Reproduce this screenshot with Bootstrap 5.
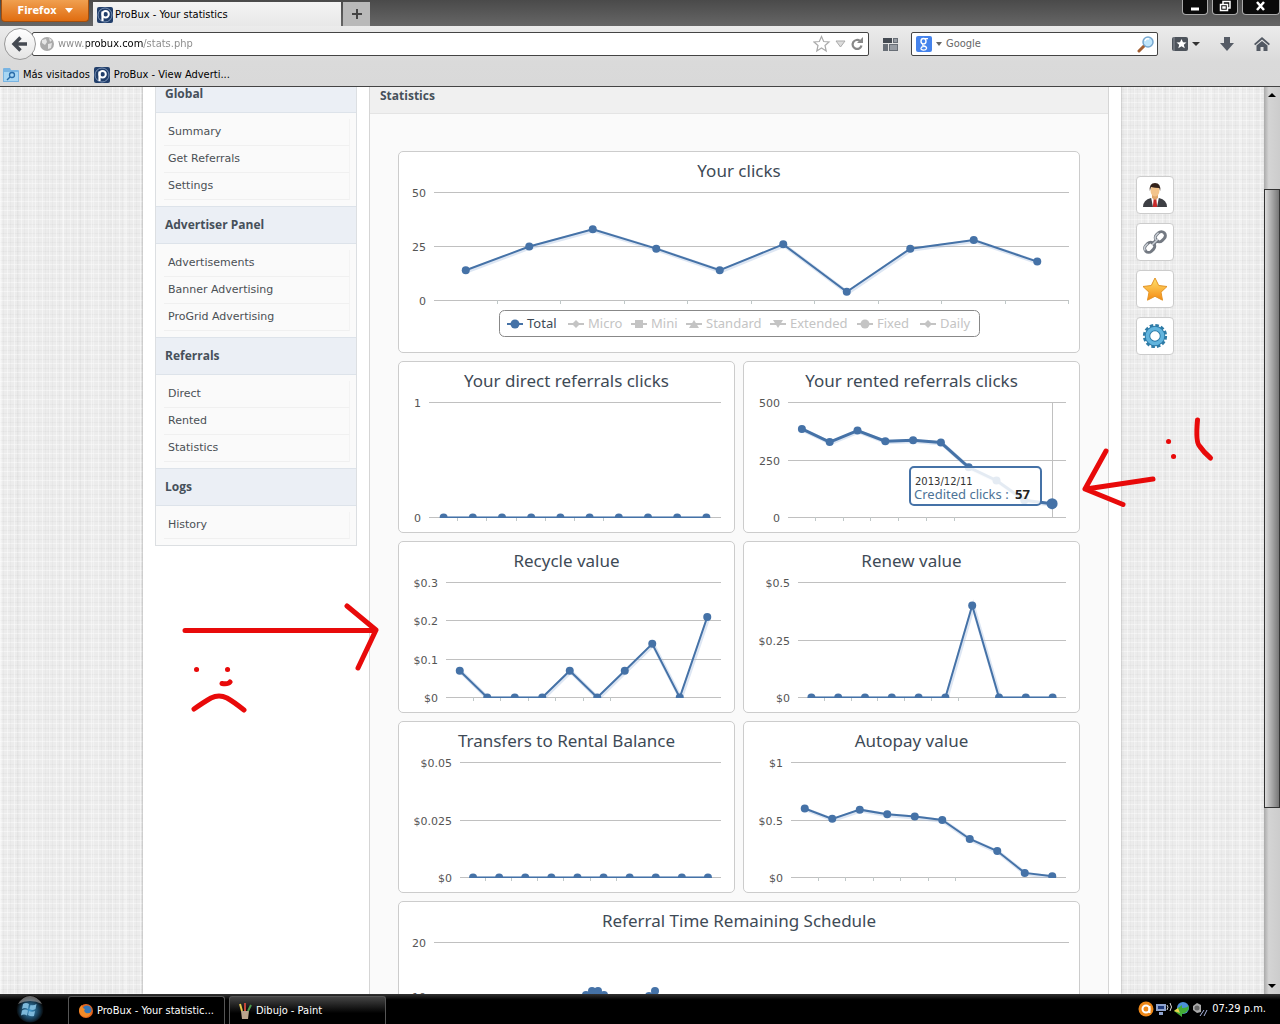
<!DOCTYPE html>
<html lang="es">
<head>
<meta charset="utf-8">
<meta name="viewport" content="width=device-width, initial-scale=1">
<title>ProBux - Your statistics</title>
<link href="https://cdn.jsdelivr.net/npm/bootstrap@5.3.0/dist/css/bootstrap.min.css" rel="stylesheet">
<style>
  body { font-family: "DejaVu Sans Condensed", "DejaVu Sans", sans-serif; font-size: 11px; line-height: 16px; color: #000; background: #000; }
  button, input { font: inherit; }
  svg { display: block; flex: none; }
  .titlebar { height: 26px; background: linear-gradient(#4a4a4a, #666); padding-left: 1px; }
  .ff-btn { width: 88px; height: 22px; border: 1px solid #a54f0c; border-top: 0; border-radius: 0 0 4px 4px; background: linear-gradient(#f0a050, #e06c10); color: #fff; font-weight: bold; padding: 0; }
  .win-tab { width: 248px; height: 24px; background: linear-gradient(#f4f4f4, #e8e8e8); margin-left: 4px; padding: 2px 0 0 4px; gap: 2px; }
  .plus-tab { width: 27px; height: 24px; border: 0; background: #b9b9b9; margin-left: 2px; padding: 0; }
  .winctl { width: 26px; height: 15px; border: 1px solid #aaa; border-top: 0; border-radius: 0 0 4px 4px; background: #0a0a0a; padding: 0; }
  .winctl.wide { width: 38px; }
  .chrome { background: linear-gradient(#ececec, #dadada 60%, #d9d9d9); border-bottom: 1px solid #444; height: 61px; }
  .navrow { height: 36px; padding: 0 10px 0 4px; }
  .back { width: 32px; height: 32px; border: 1px solid #999; border-radius: 50%; background: linear-gradient(#fff, #e4e4e4); padding: 0; z-index: 2; margin-right: -4px; }
  .field { height: 24px; background: #fff; border: 1px solid #444; border-radius: 2px; }
  .urlbox { padding: 0 5px 0 7px; }
  .field input { border: 0; outline: 0; padding: 0; background: transparent; color: #666; }
  .field .url { color: transparent; background: linear-gradient(90deg, #888 28px, #000 28px, #000 85px, #888 85px); -webkit-background-clip: text; background-clip: text; margin-left: 4px; }
  .searchbox { width: 247px; margin-left: 13px; padding: 0 3px 0 4px; }
  .searchbox input { width: 100px; }
  .plainbtn { border: 0; padding: 0; background: transparent; }
  .groups, .bm { margin-left: 14px; }
  .dl, .home { margin-left: 20px; }
  .marks { height: 25px; padding-left: 3px; }
  .marks a, .side-list a { text-decoration: none; color: #000; }
  .viewport { overflow: hidden; min-height: 0; background-color: #ececec;
    background-image: repeating-linear-gradient(90deg, rgba(255,255,255,.4) 0 1px, transparent 1px 3px, rgba(0,0,0,.02) 3px 4px, transparent 4px 7px),
      repeating-linear-gradient(0deg, rgba(255,255,255,.4) 0 1px, transparent 1px 4px, rgba(0,0,0,.025) 4px 5px, transparent 5px 9px),
      repeating-linear-gradient(90deg, rgba(255,255,255,.3) 0 2px, transparent 2px 17px, rgba(0,0,0,.015) 17px 19px, transparent 19px 31px); }
  .gutter { flex: 1 1 0; min-width: 0; }
  .site { width: 978px; margin-top: -13px; padding: 0 12px; gap: 12px; background: #fff; box-shadow: 0 0 2px #999; font-family: "DejaVu Sans", sans-serif; }
  .side { width: 202px; align-self: flex-start; border: 1px solid #dcdfe2; background: #fafafa; }
  .side h2, .panel-title { font-family: "Open Sans", "Noto Sans", sans-serif; font-size: 12px; font-weight: bold; color: #46505a; margin: 0; }
  .side h2 { height: 38px; line-height: 36px; padding-left: 9px; background: #ebeff5; border: 1px solid #dde3ea; border-width: 1px 0; }
  .side-list { padding: 6px 6px 6px 8px; margin: 0; list-style: none; }
  .side-list li { height: 27px; padding: 5px 0 0 4px; border-right: 1px solid #f3f3f3; border-bottom: 1px solid #f0f0f0; }
  .side-list a { color: #4b5055; }
  .main { background: #fafafa; border: 1px solid #d5d5d5; border-width: 0 1px; }
  .panel-title { height: 40px; line-height: 43px; padding-left: 10px; background: #f0f0f0; border-bottom: 1px solid #e4e4e4; }
  .charts { padding: 37px 28px 0; display: grid; grid-template-columns: 1fr 1fr; gap: 8px; }
  .chart { border: 1px solid #ccc; border-radius: 5px; background: #fff; }
  .chart.full { grid-column: span 2; }
  .chart svg { width: 100%; height: auto; }
  .dock { padding: 89px 0 0 15px; gap: 9px; }
  .dock button { width: 38px; height: 38px; padding: 0; border: 1px solid #ccc; border-radius: 4px; background: #fff; }
  .scroller { width: 16px; background: linear-gradient(90deg, #aaa, #d4d4d4 30%, #ccc); }
  .scroller .thumb { height: 619px; margin-top: 86px; border: 1px solid #333; background: linear-gradient(90deg, #ddd, #bbb 30%, #777); }
  .taskbar { height: 30px; background: linear-gradient(#333, #000 20%); color: #fff; padding-right: 14px; }
  .orb { margin: 0 24px 0 16px; }
  .task { height: 28px; width: 157px; border: 1px solid #555; border-width: 1px 1px 0; border-radius: 3px 3px 0 0; background: #000; color: #fff; padding: 0 0 0 10px; text-align: left; }
  .task.idle { background: linear-gradient(#444, #000 60%); margin-left: 4px; padding-left: 8px; }
  .ink { position: absolute; left: 0; top: 0; pointer-events: none; z-index: 5; }
</style>
<script src="https://cdn.jsdelivr.net/npm/bootstrap@5.3.0/dist/js/bootstrap.bundle.min.js"></script>
</head>
<body class="vh-100 d-flex flex-column overflow-hidden position-relative">
<svg width="0" height="0" class="position-absolute">
  <symbol id="logo" viewBox="0 0 16 16"><rect width="16" height="16" rx="2" fill="#223f6b"/><circle cx="8" cy="8" r="7" fill="none" stroke="#8ea4c6" stroke-width=".8"/><path d="M5.500 14V4.500" stroke="#fff" stroke-width="2.200"/><circle cx="8.600" cy="7.300" r="3.200" fill="none" stroke="#fff" stroke-width="2"/></symbol>
</svg>

<header class="flex-shrink-0">
  <div class="titlebar d-flex">
    <button class="ff-btn d-flex align-items-center justify-content-center">Firefox <svg class="ms-2" width="8" height="5"><path d="M0 0h8L4 5z" fill="#fff"/></svg></button>
    <div class="win-tab d-flex align-items-center align-self-end"><svg width="16" height="16"><use href="#logo"/></svg>ProBux - Your statistics</div>
    <button class="plus-tab align-self-end d-flex align-items-center justify-content-center" aria-label="New tab"><svg width="12" height="12"><path d="M6 1v10M1 6h10" stroke="#444" stroke-width="2"/></svg></button>
    <div class="ms-auto d-flex gap-1">
      <button class="winctl d-flex justify-content-center" aria-label="Minimize"><svg width="12" height="14"><path d="M2 9h8" stroke="#fff" stroke-width="3"/></svg></button>
      <button class="winctl d-flex justify-content-center" aria-label="Restore"><svg width="12" height="14"><path d="M4 4V1.500h7V8H9M1.500 4.500h7v6h-7zM4 7h2v1H4z" fill="none" stroke="#fff" stroke-width="1.500"/></svg></button>
      <button class="winctl wide d-flex justify-content-center" aria-label="Close"><svg width="12" height="14"><path d="M2 2l7 8M9 2l-7 8" stroke="#fff" stroke-width="2.500"/></svg></button>
    </div>
  </div>
  <div class="chrome">
    <div class="navrow d-flex align-items-center">
      <button class="back d-flex align-items-center justify-content-center" aria-label="Back"><svg width="18" height="18"><path d="M16 9H4M9.500 2.500L3 9l6.500 6.500" fill="none" stroke="#454a52" stroke-width="3.400"/></svg></button>
      <div class="field urlbox flex-grow-1 d-flex align-items-center">
        <svg width="14" height="14"><circle cx="7" cy="7" r="7" fill="#aaa"/><path d="M2 3l4-1 1 3-2 3-3-2zM8 7l4-1-1 5-3 1zM9 1l3 2-2 2z" fill="#e5e5e5"/></svg>
        <input class="url flex-grow-1" aria-label="Address" value="www.probux.com/stats.php">
        <svg width="50" height="18"><path d="M8.500 1.500l2.200 5 5.300.5-4 3.500 1.200 5.500-4.700-3-4.700 3L5 10.500 1 7l5.300-.5z" fill="#fff" stroke="#aaa" stroke-width="1.200"/><path d="M23 6h9l-4.500 6z" fill="#ddd" stroke="#aaa"/><path d="M48.500 10.500a4.500 4.500 0 1 1-1.500-4.500" fill="none" stroke="#888" stroke-width="2.200"/><path d="M50 2v6h-6z" fill="#888"/></svg>
      </div>
      <button class="plainbtn groups" aria-label="Tab groups"><svg width="15" height="14"><path d="M0 1h9v5H0z" fill="#444a52"/><path d="M10 1h5v5h-5zM0 7h5v7H0zM6 7h9v7H6z" fill="#686e76"/><path d="M11 2h3v3h-3zM7 8h7v5H7z" fill="#969ba2"/></svg></button>
      <div class="field searchbox d-flex align-items-center">
        <svg width="16" height="16"><rect width="16" height="16" rx="2" fill="#4583ec"/><ellipse cx="7.500" cy="5.200" rx="2.500" ry="2.700" fill="none" stroke="#fff" stroke-width="1.400"/><path d="M9 2.600h3M7 8q-1 1.500 1 2 3 .8 2.500 2.500-.6 1.800-3 1.700-2.700-.2-2.500-2 .2-1.500 2.500-1.600" fill="none" stroke="#fff" stroke-width="1.300"/></svg>
        <svg class="mx-1" width="6" height="4"><path d="M0 0h6L3 4z" fill="#666"/></svg>
        <input class="flex-grow-1" aria-label="Search" value="Google">
        <svg width="17" height="17"><path d="M2 15l6-6" stroke="#a35f32" stroke-width="3" stroke-linecap="round"/><circle cx="11" cy="6" r="5" fill="#bfe5fb" stroke="#78a8d0" stroke-width="1.500"/><path d="M8 5q1-3 4-2" stroke="#fff" stroke-width="1.500" fill="none"/></svg>
      </div>
      <button class="plainbtn bm" aria-label="Bookmarks"><svg width="28" height="14"><rect y="0" width="16" height="14" rx="2" fill="#4d535b"/><path d="M2 0v14" stroke="#8b9098"/><path d="M9.500 2l1.500 3.200 3.500.3-2.700 2.300 1 3.500-3.300-2-3.200 2 .9-3.500L4.500 5.500 8 5.200z" fill="#fff"/><path d="M20 5h8l-4 4z" fill="#333"/></svg></button>
      <button class="plainbtn dl" aria-label="Downloads"><svg width="14" height="15"><path d="M4 0h6v6h4l-7 8-7-8h4z" fill="#565c66"/></svg></button>
      <button class="plainbtn home" aria-label="Home"><svg width="16" height="15"><path d="M8 0l8 7-1.300 1.300L8 2.500 1.300 8.300 0 7zM2.500 8.500L8 4l5.500 4.500V14h-4v-4h-3v4h-4z" fill="#535963"/></svg></button>
    </div>
    <nav class="marks d-flex align-items-center">
      <svg width="16" height="14"><path d="M0 1q0-1 1-1h6l1 2h7q1 0 1 1v11H0z" fill="#79b4e2"/><path d="M1 4h14v9H1z" fill="#a8d6f3"/><circle cx="9" cy="7" r="2.500" fill="none" stroke="#286ca9" stroke-width="1.300"/><path d="M7 9l-3 3" stroke="#286ca9" stroke-width="1.500"/></svg>
      <a class="ms-1" href="#">Más visitados</a>
      <svg class="ms-1" width="16" height="16"><use href="#logo"/></svg>
      <a class="ms-1" href="#">ProBux - View Adverti...</a>
    </nav>
  </div>
</header>

<main class="viewport d-flex flex-grow-1">
  <div class="gutter"></div>
  <div class="site d-flex flex-shrink-0">
    <aside class="side">
      <h2>Global</h2>
      <ul class="side-list"><li><a href="#">Summary</a></li><li><a href="#">Get Referrals</a></li><li><a href="#">Settings</a></li></ul>
      <h2>Advertiser Panel</h2>
      <ul class="side-list"><li><a href="#">Advertisements</a></li><li><a href="#">Banner Advertising</a></li><li><a href="#">ProGrid Advertising</a></li></ul>
      <h2>Referrals</h2>
      <ul class="side-list"><li><a href="#">Direct</a></li><li><a href="#">Rented</a></li><li><a href="#">Statistics</a></li></ul>
      <h2>Logs</h2>
      <ul class="side-list"><li><a href="#">History</a></li></ul>
    </aside>
    <section class="main flex-grow-1">
      <h1 class="panel-title">Statistics</h1>
      <div class="charts" id="charts"></div>
    </section>
  </div>
  <div class="gutter">
    <div class="dock d-flex flex-column">
    <button class="d-flex align-items-center justify-content-center" aria-label="Profile"><svg width="24" height="24"><path d="M0 24q0-7 8-9h8q8 2 8 9z" fill="#3d3f44"/><path d="M8 14h8l-2 10h-4z" fill="#fff"/><path d="M10.800 15h2.400l1 9h-4.400z" fill="#c62a2a"/><path d="M9 11h6v4l-3 2-3-2z" fill="#e0a66a"/><ellipse cx="12" cy="7.500" rx="4.500" ry="6" fill="#f3c48c"/><path d="M6.800 8Q6 0 12 0t5.200 8l-1-3Q12 5 8 4z" fill="#33221a"/></svg></button>
    <button class="d-flex align-items-center justify-content-center" aria-label="Links"><svg width="24" height="24" viewBox="0 0 24 24"><g fill="none" transform="rotate(-45 12 12)"><rect x="-1" y="8" width="11" height="8" rx="4" stroke="#737982" stroke-width="3"/><rect x="14" y="8" width="11" height="8" rx="4" stroke="#737982" stroke-width="3"/><path d="M8 12h8" stroke="#737982" stroke-width="4"/><path d="M8 12h8M-1 11q1-3 4-3h3M14 11q1-3 4-3h3" stroke="#c9ced5" stroke-width="1.500"/></g></svg></button>
    <button class="d-flex align-items-center justify-content-center" aria-label="Favourites"><svg width="26" height="24"><defs><linearGradient id="gold" x2="0" y2="1"><stop stop-color="#ffe36d"/><stop offset="1" stop-color="#f58a13"/></linearGradient></defs><path d="M13 1l3.700 7.500 8.300 1-6 5.700 1.500 8L13 19.300l-7.500 3.900 1.500-8L1 9.500l8.300-1z" fill="url(#gold)" stroke="#e39426" stroke-linejoin="round"/></svg></button>
    <button class="d-flex align-items-center justify-content-center" aria-label="Settings"><svg width="26" height="26" viewBox="-13 -13 26 26"><circle r="10.300" fill="none" stroke="#2f7ba6" stroke-width="3.600" stroke-dasharray="3.400 1.993"/><circle r="7.500" fill="none" stroke="#2c7ba8" stroke-width="5.500"/><circle r="7.500" fill="none" stroke="#62b4dd" stroke-width="3.600"/></svg></button>
    </div>
  </div>
  <div class="scroller d-flex flex-column">
    <svg width="16" height="16"><path d="M4 10h8L8 6z"/></svg>
    <div class="thumb"></div>
    <svg class="mt-auto" width="16" height="16"><path d="M4 6h8l-4 4z"/></svg>
  </div>
</main>

<footer class="taskbar d-flex align-items-end flex-shrink-0">
  <button class="plainbtn orb align-self-center" aria-label="Start"><svg width="28" height="28"><defs><radialGradient id="orb" cx=".5" cy=".55"><stop stop-color="#3f9ad0"/><stop offset=".7" stop-color="#15384f"/><stop offset="1" stop-color="#050505"/></radialGradient></defs><circle cx="14" cy="14" r="13.500" fill="url(#orb)"/><path d="M2 9Q7 1 14 1t12 8q-6-3-12-3T2 9z" fill="#aaa" opacity=".6"/><path d="M7 9q3-2 6 0l-1 5q-3-2-6 0zM14.500 10q3 1 6-1l-1 5q-3 2-6 0zM6 15.500q3-2 6 0l-1 5q-3-2-6 0zM13 16q3 1.500 6 0l-1 5q-3 1-6-1z" fill="#7db9da"/></svg></button>
  <button class="task d-flex align-items-center gap-1"><svg width="14" height="14"><circle cx="7" cy="7" r="7" fill="#e8641b"/><circle cx="8" cy="6" r="4.500" fill="#3577b8"/><path d="M0 7q0-4 3-6 0 3 3 4-2 2 1 4 3 1 5-1-1 5-6 5-5-1-6-6z" fill="#f28a28"/></svg>ProBux - Your statistic...</button>
  <button class="task idle d-flex align-items-center gap-1"><svg width="14" height="16"><path d="M3 8h8l-1 8H4z" fill="#b9a48c"/><path d="M4 8L2 1" stroke="#e5c84b" stroke-width="2"/><path d="M7 8V0" stroke="#c4453a" stroke-width="2"/><path d="M10 8l3-6" stroke="#4f9a4e" stroke-width="2"/></svg>Dibujo - Paint</button>
  <div class="ms-auto align-self-center d-flex align-items-center gap-1">
    <svg width="70" height="16"><circle cx="8" cy="8" r="7.500" fill="#ee8717"/><circle cx="8" cy="8" r="3.500" fill="none" stroke="#fff" stroke-width="2"/><path d="M11.500 5v7" stroke="#fff" stroke-width="2"/><path d="M18 3h10v7H18zM21 11h4v3h-4z" fill="#8fa3cd"/><path d="M20 5h6v3h-6z" fill="#203a7a"/><path d="M29 4q2 2 0 5M32 2q3 4 0 8" stroke="#ddd" fill="none"/><circle cx="45" cy="7" r="6" fill="#4c90d8"/><path d="M36 10l8-6v3q6 0 7-3 0 8-7 9v3z" fill="#43ad36"/><path d="M36 10l4-3 2 5z" fill="#e9d34b"/><path d="M55 5l4-3 4 2v7l-4 1-4-3z" fill="#aaa"/><circle cx="59" cy="7" r="2.500" fill="#666"/><path d="M62 15l4-6M66 15l3-6" stroke="#a9b5e0"/></svg>
    <span>07:29 p.m.</span>
  </div>
</footer>

<svg class="ink" width="1280" height="1024" fill="none" stroke="#e80a0a" stroke-width="5" stroke-linecap="round" stroke-linejoin="round">
  <path d="M185 630.500H375M347 606L376 630L358 668M222 683.500q6 1 8-1.500M194 709Q204 702 211 698q8-4 16 0Q234 702 244 710"/>
  <path d="M1153 479L1086 489M1106 451L1085 489L1123 504.500M1197.500 420q-2 22 2 26 4 6 11 12"/>
  <path d="M196.500 669.500h.1M227.500 669.500h.1M1168.500 441.500h.1M1173.500 456.500h.1"/>
</svg>

<script>
const blue = '#4572a7';
const zeros = Array(10).fill(0);
const charts = [
  { title: 'Your clicks', full: true, h: 200, left: 35, bottom: 148, max: 50, labels: ['50', '25', '0'], data: [14,25,33,24,14,26,4,24,28,18], ticks: 10, legend: true },
  { title: 'Your direct referrals clicks', left: 30, max: 1, labels: ['1', '0'], data: zeros },
  { title: 'Your rented referrals clicks', left: 44, max: 500, labels: ['500', '250', '0'], data: [385,328,378,332,336,326,218,161,75,60], hover: true },
  { title: 'Recycle value', left: 47, max: 0.3, labels: ['$0.3', '$0.2', '$0.1', '$0'], data: [.07,0,0,0,.07,0,.07,.14,0,.21] },
  { title: 'Renew value', left: 54, max: 0.5, labels: ['$0.5', '$0.25', '$0'], data: [0,0,0,0,0,0,.4,0,0,0] },
  { title: 'Transfers to Rental Balance', left: 61, max: 0.05, labels: ['$0.05', '$0.025', '$0'], data: zeros },
  { title: 'Autopay value', left: 47, max: 1, labels: ['$1', '$0.5', '$0'], data: [.6,.51,.59,.55,.53,.5,.335,.23,.04,.01] },
  { title: 'Referral Time Remaining Schedule', full: true, h: 200, left: 35, bottom: 148, max: 20, labels: ['20', '10', '0'], data: [], dots: [[187,93],[193,89],[199,89],[205,93],[250,94],[256,89]] }
];
const marks = {
  dot: x => `<circle cx="${x}" cy="172" r="4.500"/>`,
  dia: x => `<path d="M${x-4} 172l4-4 4 4-4 4z"/>`,
  sq: x => `<path d="M${x-4} 168h8v8h-8z"/>`,
  up: x => `<path d="M${x-5} 176h10l-5-8z"/>`,
  dn: x => `<path d="M${x-5} 168h10l-5 8z"/>`
};
const legend = [['Total',108,'dot'],['Micro',169,'dia'],['Mini',232,'sq'],['Standard',287,'up'],['Extended',371,'dn'],['Fixed',458,'dot'],['Daily',521,'dia']];
document.getElementById('charts').innerHTML = charts.map((c, n) => {
  const w = c.full ? 680 : 335, h = c.h || 170, right = c.full ? 670 : 322, top = 40, bottom = c.bottom || 155;
  const step = (right - c.left) / 10;
  let s = `<text x="${w / 2}" y="25" text-anchor="middle" font-size="17" fill="#3e4a56" font-family="Noto Sans, sans-serif">${c.title}</text>`;
  c.labels.forEach((t, i) => {
    const y = Math.round(top + (bottom - top) * i / (c.labels.length - 1)) + .5;
    s += `<path d="M${c.left} ${y}H${right}" stroke="#c0c0c0"/><text x="${c.left - 8}" y="${y + 4}" text-anchor="end" fill="#555" font-size="11">${t}</text>`;
  });
  for (let i = 1; i <= (c.ticks || 6); i++) s += `<path d="M${Math.round(c.left + step * i) - .5} ${bottom}v4" stroke="#c0c8c8"/>`;
  const pts = c.data.map((v, i) => [c.left + step * (i + .5), bottom + .5 - (bottom - top) * v / c.max]);
  if (c.hover) s += `<path d="M308.500 40V155" stroke="#c0c0c0"/>`;
  s += `<clipPath id="clip${n}"><path d="M0 0H${w}V${bottom + (c.hover ? 20 : 1)}H0z"/></clipPath><g clip-path="url(#clip${n})">`;
  s += `<polyline points="${pts.map(p => [p[0] + 1, p[1] + 1]).join(' ')}" fill="none" stroke="#9db8dc" stroke-opacity=".35" stroke-width="4"/>`;
  s += `<polyline points="${pts.join(' ')}" fill="none" stroke="${blue}" stroke-width="${c.hover ? 3 : 2}"/>`;
  (c.dots || pts).forEach((p, i) => s += `<circle cx="${p[0]}" cy="${p[1]}" r="${c.hover && i == 9 ? 5.5 : 4}" fill="${blue}"/>`);
  s += '</g>';
  if (c.legend) {
    s += '<rect x="100.500" y="158.500" width="480" height="26" rx="5" fill="#fff" stroke="#888"/>';
    legend.forEach((l, i) => {
      const col = i ? '#c4c4c4' : blue;
      s += `<g fill="${col}"><path d="M${l[1]} 172h16" stroke="${col}" stroke-width="2"/>${marks[l[2]](l[1] + 8)}</g><text x="${l[1] + 20}" y="176" font-size="13" fill="${i ? '#c4c4c4' : '#3e4a56'}" font-family="Noto Sans, sans-serif">${l[0]}</text>`;
    });
  }
  if (c.hover) s += `<rect x="166" y="105" width="131" height="38" rx="4" fill="#fff" fill-opacity=".86" stroke="${blue}" stroke-width="2"/><text x="171" y="123" font-size="10" fill="#333">2013/12/11</text><text x="170" y="137" font-size="13" fill="#4d7396" font-family="Noto Sans, sans-serif">Credited clicks :</text><text x="271" y="137" font-size="13" font-weight="bold" fill="#222" font-family="Noto Sans, sans-serif">57</text>`;
  return `<div class="chart ${c.full ? 'full' : ''}"><svg viewBox="0 0 ${w} ${h}" role="img" aria-label="${c.title}">${s}</svg></div>`;
}).join('');
</script>
</body>
</html>
